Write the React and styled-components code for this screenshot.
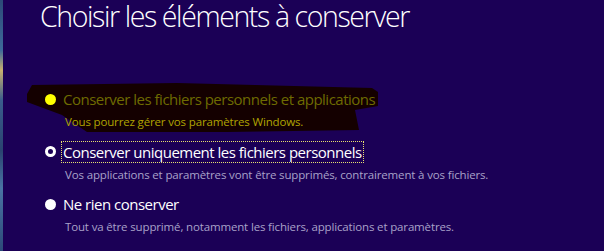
import React from 'react';
import styled, { createGlobalStyle } from 'styled-components';

const GlobalStyle = createGlobalStyle`
  html, body {
    margin: 0;
    padding: 0;
    background: #1b0056;
    font-family: "Open Sans", "Noto Sans", sans-serif;
  }
`;

const Screen = styled.div`
  position: relative;
  width: 604px;
  height: 251px;
  overflow: hidden;
  display: flex;
  background: #1b0056;
`;

const DesktopEdge = styled.div`
  width: 3px;
  flex: none;
  background: linear-gradient(180deg, #2c4a78 0%, #3e6a9a 20%, #c8b070 28%, #3a5d8c 40%, #2a4470 60%, #4a74a4 75%, #2c4a78 100%);
`;

const Content = styled.div`
  flex: 1;
  padding: 0 0 0 37px;
`;

const Title = styled.h1`
  margin: 0;
  font-size: 28.5px;
  font-weight: 300;
  color: #ffffff;
  line-height: 32px;
  letter-spacing: -1.4px;
  white-space: nowrap;
`;

const Options = styled.div`
  margin-top: 56px;
  display: flex;
  flex-direction: column;
  gap: 10.5px;
`;

const Option = styled.div`
  position: relative;
  display: flex;
  flex-direction: column;
  gap: 4px;
`;

const Row = styled.div`
  display: flex;
  align-items: center;
  gap: 5px;
  height: 22px;
  padding-left: 5px;
`;

const Radio = styled.span`
  width: 11px;
  height: 11px;
  border-radius: 50%;
  box-sizing: border-box;
  flex: none;
  background: ${p => (p.$ring ? '#1b0056' : p.$color)};
  border: ${p => (p.$ring ? '3px solid #ffffff' : 'none')};
`;

const Label = styled.span`
  font-size: 15px;
  color: ${p => p.$color};
  line-height: 20px;
  padding: 0 1px;
  border: 1px dotted ${p => (p.$focus ? '#e8e070' : 'transparent')};
  letter-spacing: -0.5px;
`;

const Desc = styled.div`
  font-size: 11.5px;
  line-height: 16px;
  padding-left: 25px;
  color: ${p => p.$color};
  letter-spacing: -0.15px;
`;

const Scribble = styled.svg`
  position: absolute;
  left: -13px;
  top: -6px;
  width: 351px;
  height: 50px;
  z-index: 0;
`;

const Layer = styled.div`
  position: relative;
  z-index: 1;
  display: flex;
  flex-direction: column;
  gap: 4px;
`;

const App = () => (
  <>
    <GlobalStyle />
    <Screen>
      <DesktopEdge />
      <Content>
        <Title>Choisir les éléments à conserver</Title>
        <Options>
          <Option>
            <Scribble viewBox="0 0 351 50">
              <path
                d="M5 3 L150 1 L345 6 L351 10 L351 24 L328 28 L332 48 L200 50 L60 50 L35 33 L0 20 L0 12 Z"
                fill="#140000"
              />
            </Scribble>
            <Layer>
              <Row>
                <Radio $color="#ffff00" />
                <Label $color="#6e6b00">Conserver les fichiers personnels et applications</Label>
              </Row>
              <Desc $color="#b0a400">Vous pourrez gérer vos paramètres Windows.</Desc>
            </Layer>
          </Option>
          <Option>
            <Row>
              <Radio $ring />
              <Label $color="#ffffff" $focus>Conserver uniquement les fichiers personnels</Label>
            </Row>
            <Desc $color="#a9a2c9">Vos applications et paramètres vont être supprimés, contrairement à vos fichiers.</Desc>
          </Option>
          <Option>
            <Row>
              <Radio $color="#ffffff" />
              <Label $color="#ffffff">Ne rien conserver</Label>
            </Row>
            <Desc $color="#a9a2c9">Tout va être supprimé, notamment les fichiers, applications et paramètres.</Desc>
          </Option>
        </Options>
      </Content>
    </Screen>
  </>
);

export default App;
